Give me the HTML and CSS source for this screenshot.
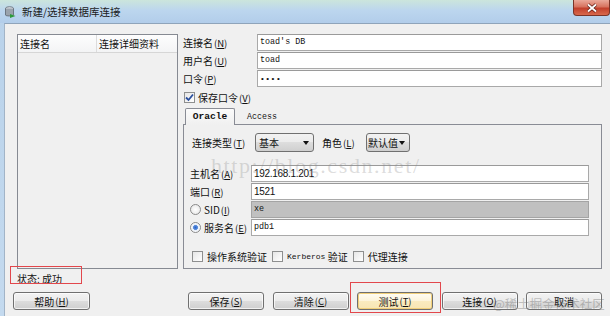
FILE: index.html
```html
<!DOCTYPE html>
<html lang="zh-CN">
<head>
    <meta charset="UTF-8">
    <title>新建/选择数据库连接</title>
    <link rel="stylesheet" href="styles.css">
</head>
<body>
    <div class="window">
        <div class="titlebar">
            <svg class="app-icon" width="11" height="12" viewBox="0 0 11 12">
                <ellipse cx="4.5" cy="2.5" rx="4" ry="1.8" fill="#d8dde3" stroke="#5d6670" stroke-width="0.8"/>
                <path d="M0.5 2.5 V9 C0.5 10.3 8.5 10.3 8.5 9 V2.5" fill="#9aa3ad" stroke="#5d6670" stroke-width="0.8"/>
                <path d="M5 8 L10.5 10 L5 12 Z" fill="#2e9a3c"/>
            </svg>
            <span class="title">新建/选择数据库连接</span>
            <div class="close">
                <svg width="12" height="10" viewBox="0 0 12 10">
                    <path d="M2 1.5 L10 8.5 M10 1.5 L2 8.5" stroke="#5a1a12" stroke-width="3.2"/>
                    <path d="M2 1.5 L10 8.5 M10 1.5 L2 8.5" stroke="#fff" stroke-width="1.8"/>
                </svg>
            </div>
        </div>

        <div class="client">
            <div class="top">
                <div class="conn-list">
                    <div class="list-head">
                        <span class="col col-name">连接名</span>
                        <span class="col">连接详细资料</span>
                    </div>
                </div>

                <div class="form">
                    <div class="field">
                        <label>连接名<span class="key">(<u>N</u>)</span></label>
                        <div class="edit mono">toad's DB</div>
                    </div>
                    <div class="field">
                        <label>用户名<span class="key">(<u>U</u>)</span></label>
                        <div class="edit mono">toad</div>
                    </div>
                    <div class="field">
                        <label>口令<span class="key">(<u>P</u>)</span></label>
                        <div class="edit mono pass">••••</div>
                    </div>
                    <div class="save">
                        <span class="box checked">
                            <svg width="9" height="9" viewBox="0 0 9 9"><path d="M1 4.5 L3.5 7 L8 1.5" fill="none" stroke="#2a4f9e" stroke-width="1.8"/></svg>
                        </span>
                        <span>保存口令<span class="key">(<u>V</u>)</span></span>
                    </div>

                    <div class="tabs">
                        <span class="tab active">Oracle</span>
                        <span class="tab">Access</span>
                    </div>
                    <div class="panel">
                        <div class="type-row">
                            <span class="type-label">连接类型<span class="key">(<u>T</u>)</span></span>
                            <span class="combo combo-type">基本<i class="arrow"></i></span>
                            <span class="role-label">角色<span class="key">(<u>L</u>)</span></span>
                            <span class="combo combo-role">默认值<i class="arrow"></i></span>
                        </div>
                        <div class="rows">
                            <span class="row-label">主机名<span class="key">(<u>A</u>)</span></span>
                            <div class="edit num">192.168.1.201</div>
                            <span class="row-label">端口<span class="key">(<u>R</u>)</span></span>
                            <div class="edit num">1521</div>
                            <span class="row-label"><span class="radio"></span>SID<span class="key">(<u>I</u>)</span></span>
                            <div class="edit mono off">xe</div>
                            <span class="row-label"><span class="radio on"></span>服务名<span class="key">(<u>E</u>)</span></span>
                            <div class="edit mono">pdb1</div>
                        </div>
                        <div class="opts">
                            <span class="opt"><span class="box"></span>操作系统验证</span>
                            <span class="opt"><span class="box"></span><span class="mono small">Kerberos</span>&nbsp;验证</span>
                            <span class="opt"><span class="box"></span>代理连接</span>
                        </div>
                    </div>
                </div>
            </div>

            <div class="status">状态: 成功</div>

            <div class="buttons">
                <span class="btn btn-help">帮助<span class="key">(<u>H</u>)</span></span>
                <div class="btn-group">
                    <span class="btn">保存<span class="key">(<u>S</u>)</span></span>
                    <span class="btn">清除<span class="key">(<u>C</u>)</span></span>
                    <span class="btn btn-hot">测试<span class="key">(<u>T</u>)</span></span>
                    <span class="btn">连接<span class="key">(<u>O</u>)</span></span>
                    <span class="btn">取消</span>
                </div>
            </div>
        </div>

        <div class="mark mark-status"></div>
        <div class="mark mark-test"></div>
        <div class="wm wm-csdn">http://blog.csdn.net/</div>
        <div class="wm wm-juejin">@稀土掘金技术社区</div>
    </div>
</body>
</html>
```

FILE: styles.css
```css
* {
    box-sizing: border-box;
}
body {
    margin: 0;
    width: 610px;
    height: 316px;
    overflow: hidden;
    font-family: "Noto Sans CJK SC", "Liberation Sans", sans-serif;
    font-size: 10px;
    color: #111;
    background: #bcd4ec;
}
.window {
    position: relative;
    height: 316px;
    padding-left: 4px;
    display: flex;
    flex-direction: column;
    background: linear-gradient(#b9d2ea, #c4daef);
}
.titlebar {
    height: 23px;
    margin-left: -4px;
    padding-left: 5px;
    display: flex;
    align-items: center;
    background: linear-gradient(#cbe5dc, #bcd6ee 45%, #b2cdea);
}
.app-icon {
    flex: none;
}
.title {
    margin-left: 6px;
    font-size: 10.5px;
    color: #1b1b1b;
}
.close {
    align-self: flex-start;
    margin-left: auto;
    width: 37px;
    height: 16px;
    display: flex;
    align-items: center;
    justify-content: center;
    border: 1px solid #7a3428;
    border-top: none;
    border-radius: 0 0 4px 4px;
    background: linear-gradient(#eaa99a, #d7735f 45%, #c2402c 55%, #d8694d);
}

.client {
    flex: 1;
    display: flex;
    flex-direction: column;
    padding: 10px 8px 0 12px;
    background: #f0f0f0;
    border-top: 1px solid #8fa4ba;
    border-left: 1px solid #a2b4c7;
}
.top {
    height: 235px;
    display: flex;
    gap: 5px;
}
.conn-list {
    width: 161px;
    border: 1px solid #868a92;
    background: #f0f0f0;
}
.list-head {
    height: 18px;
    display: flex;
    line-height: 17px;
    background: linear-gradient(#fdfdfd, #f3f4f5);
    border-bottom: 1px solid #d6d6d6;
}
.col {
    padding-left: 2px;
}
.col-name {
    width: 79px;
    border-right: 1px solid #dcdcdc;
}

.form {
    width: 419px;
    display: flex;
    flex-direction: column;
}
.field {
    height: 17px;
    margin-bottom: 1px;
    display: flex;
    align-items: center;
}
.field label {
    width: 74px;
}
.key {
    margin-left: 1px;
    font-size: 9.5px;
}
.edit {
    flex: 1;
    height: 17px;
    padding-left: 2px;
    line-height: 15px;
    background: #fff;
    border: 1px solid #a9a9a9;
    border-top-color: #9a9a9a;
    white-space: nowrap;
}
.mono {
    font-family: "Liberation Mono", "DejaVu Sans Mono", monospace;
    font-size: 8.4px;
    color: #111;
}
.pass {
    font-size: 8px;
    letter-spacing: 0.5px;
}
.num {
    font-family: "Liberation Sans", sans-serif;
    font-size: 10px;
    letter-spacing: -0.3px;
}
.off {
    background: #c0c0c0;
    border-color: #a4a4a4;
}
.save {
    height: 17px;
    margin-top: 1px;
    padding-left: 1px;
    display: flex;
    align-items: center;
    gap: 3px;
}
.box {
    width: 11px;
    height: 11px;
    flex: none;
    display: inline-flex;
    align-items: center;
    justify-content: center;
    border: 1px solid #8e8f8f;
    background: linear-gradient(135deg, #e6e6e6, #fff);
}

.tabs {
    height: 16px;
    margin-top: 2px;
    padding-left: 2px;
    display: flex;
    align-items: flex-end;
}
.tab {
    height: 15px;
    padding-left: 12px;
    line-height: 15px;
    font-family: "Liberation Mono", monospace;
    font-size: 8.3px;
}
.tab.active {
    position: relative;
    z-index: 1;
    width: 50px;
    height: 17px;
    margin-bottom: -1px;
    padding-left: 0;
    text-align: center;
    line-height: 15px;
    font-size: 9.6px;
    font-weight: bold;
    border: 1px solid #898c95;
    border-bottom: none;
    border-radius: 2px 2px 0 0;
    background: linear-gradient(#fbfbfb, #f0f0f0);
}
.panel {
    flex: 1;
    padding: 8px 12px 0 6px;
    border: 1px solid #898c95;
    background: #f0f0f0;
}
.type-row {
    height: 19px;
    padding-left: 2px;
    display: flex;
    align-items: center;
}
.type-label {
    width: 63px;
}
.role-label {
    width: 44px;
    margin-left: 8px;
}
.combo {
    position: relative;
    height: 19px;
    padding-left: 3px;
    line-height: 17px;
    border: 1px solid #707070;
    border-radius: 3px;
    background: linear-gradient(#f2f2f2, #ebebeb 50%, #dddddd 50%, #cfcfcf);
}
.combo-type {
    width: 59px;
}
.combo-role {
    width: 44px;
    padding-left: 1px;
}
.arrow {
    position: absolute;
    right: 4px;
    top: 7px;
    border-left: 3.5px solid transparent;
    border-right: 3.5px solid transparent;
    border-top: 4px solid #111;
}
.rows {
    margin-top: 13px;
    display: grid;
    grid-template-columns: 61px 1fr;
    grid-auto-rows: 17px;
    row-gap: 1px;
    align-items: center;
}
.row-label {
    display: flex;
    align-items: center;
}
.radio {
    width: 11px;
    height: 11px;
    margin-right: 3px;
    border: 1px solid #8a8a8a;
    border-radius: 50%;
    background: radial-gradient(#fff, #e4e4e4);
}
.radio.on {
    background: radial-gradient(circle, #2a62c6 0, #5d90de 2.2px, #e8eef8 2.8px, #fff 5px);
}
.opts {
    height: 12px;
    margin-top: 14px;
    padding-left: 2px;
    display: flex;
    align-items: center;
}
.opt {
    display: flex;
    align-items: center;
    margin-right: 5px;
}
.opt .box {
    margin-right: 4px;
}
.small {
    font-size: 8px;
}

.status {
    height: 19px;
    line-height: 19px;
}
.buttons {
    height: 18px;
    margin-top: 4px;
    display: flex;
}
.btn {
    width: 76px;
    height: 18px;
    display: flex;
    align-items: center;
    justify-content: center;
    border: 1px solid #707070;
    border-radius: 3px;
    background: linear-gradient(#f3f3f3, #ebebeb 50%, #dddddd 50%, #cfcfcf);
    box-shadow: inset 0 0 0 1px rgba(255, 255, 255, 0.7);
}
.btn-help {
    width: 77px;
    margin-left: -4px;
}
.btn-group {
    margin-left: auto;
    display: flex;
    gap: 8.5px;
}
.btn-hot {
    border-color: #6f6f6f;
    background: linear-gradient(#fffdf5, #fdf4da 50%, #faebc0 50%, #f8e6b4);
    box-shadow: inset 0 0 0 1px #f1cf7a;
}

.mark {
    position: absolute;
    border: 1.5px solid #e2474c;
}
.mark-status {
    left: 10px;
    top: 266px;
    width: 72px;
    height: 18px;
}
.mark-test {
    left: 350px;
    top: 282px;
    width: 91px;
    height: 31px;
}
.wm {
    position: absolute;
    pointer-events: none;
    white-space: nowrap;
}
.wm-csdn {
    left: 211px;
    top: 153px;
    font-family: "Liberation Serif", serif;
    font-size: 22px;
    letter-spacing: 1.6px;
    color: rgba(140, 140, 140, 0.3);
}
.wm-juejin {
    left: 493px;
    top: 294px;
    font-size: 12.5px;
    color: rgba(110, 110, 110, 0.4);
}
```
